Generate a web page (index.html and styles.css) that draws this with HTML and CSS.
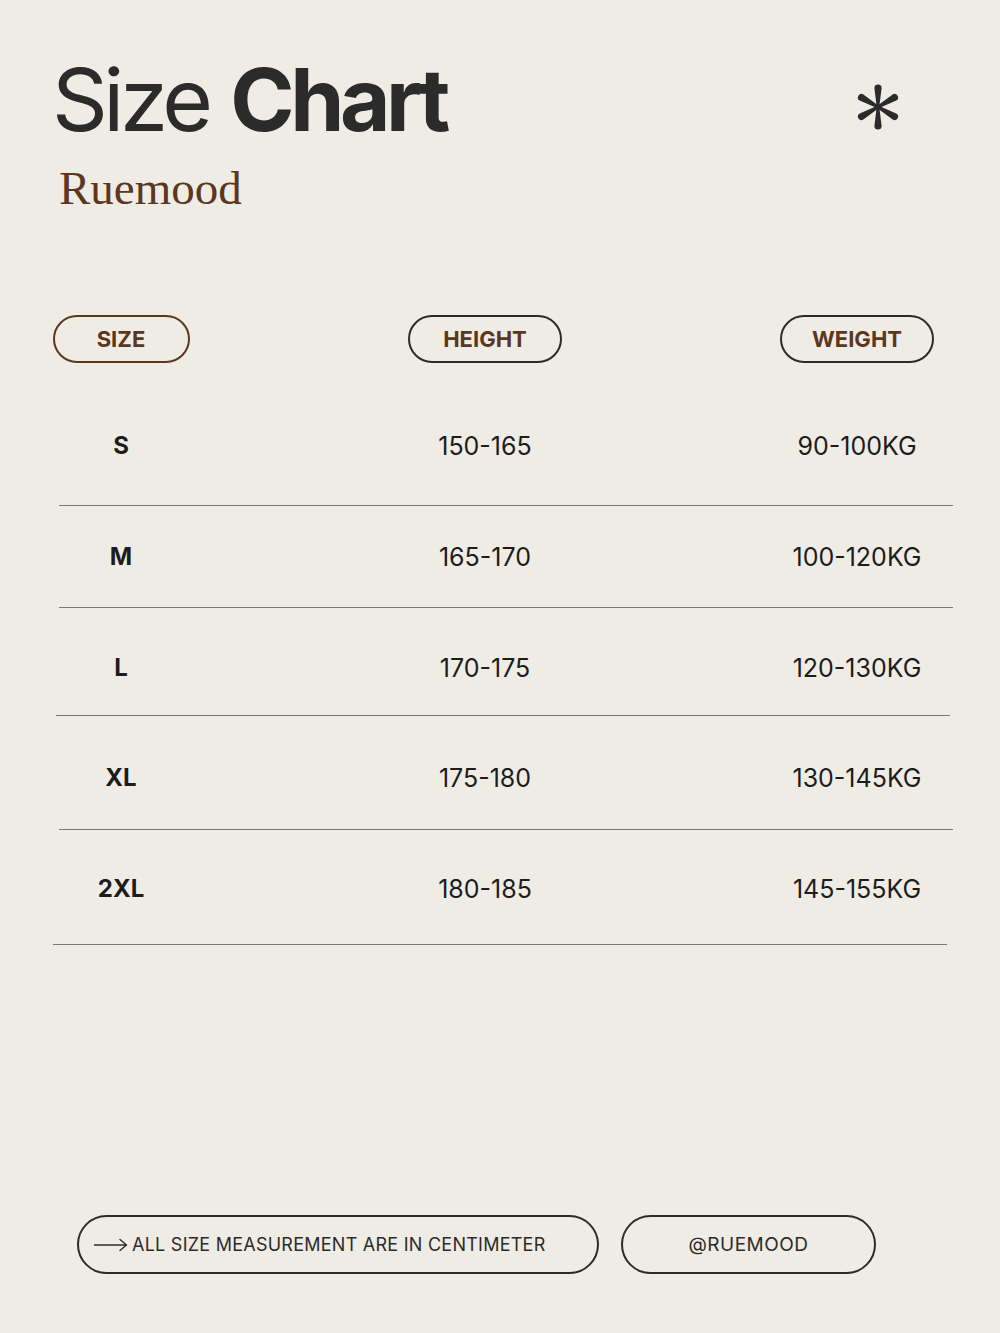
FILE: index.html
```html
<!DOCTYPE html>
<html lang="en">
<head>
<meta charset="utf-8">
<title>Size Chart - Ruemood</title>
<link rel="stylesheet" href="styles.css">
</head>
<body>
<div class="page">
  <header class="header">
    <div class="brand">
      <h1 class="title"><span class="title-light">Size</span> <span class="title-bold">Chart</span></h1>
      <div class="brand-name">Ruemood</div>
    </div>
    <svg class="star" viewBox="-25 -25 50 50" width="50" height="50" aria-hidden="true">
      <g fill="#2b2b2b">
        <path d="M-1.3 0 L-3.6 -19 A3.6 3.6 0 0 1 3.6 -19 L1.3 0 Z"/>
        <path d="M-1.3 0 L-3.6 -19 A3.6 3.6 0 0 1 3.6 -19 L1.3 0 Z" transform="rotate(60)"/>
        <path d="M-1.3 0 L-3.6 -19 A3.6 3.6 0 0 1 3.6 -19 L1.3 0 Z" transform="rotate(120)"/>
        <path d="M-1.3 0 L-3.6 -19 A3.6 3.6 0 0 1 3.6 -19 L1.3 0 Z" transform="rotate(180)"/>
        <path d="M-1.3 0 L-3.6 -19 A3.6 3.6 0 0 1 3.6 -19 L1.3 0 Z" transform="rotate(240)"/>
        <path d="M-1.3 0 L-3.6 -19 A3.6 3.6 0 0 1 3.6 -19 L1.3 0 Z" transform="rotate(300)"/>
        <circle r="2.4"/>
      </g>
    </svg>
  </header>

  <section class="chart">
    <div class="grid head-row">
      <div class="cell"><span class="pill pill-size">SIZE</span></div>
      <div class="cell"><span class="pill pill-wide">HEIGHT</span></div>
      <div class="cell"><span class="pill pill-wide">WEIGHT</span></div>
    </div>

    <div class="grid data-row row-1">
      <div class="cell size">S</div>
      <div class="cell">150-165</div>
      <div class="cell">90-100KG</div>
    </div>
    <div class="rule rule-1"></div>

    <div class="grid data-row row-2">
      <div class="cell size">M</div>
      <div class="cell">165-170</div>
      <div class="cell">100-120KG</div>
    </div>
    <div class="rule rule-2"></div>

    <div class="grid data-row row-3">
      <div class="cell size">L</div>
      <div class="cell">170-175</div>
      <div class="cell">120-130KG</div>
    </div>
    <div class="rule rule-3"></div>

    <div class="grid data-row row-4">
      <div class="cell size">XL</div>
      <div class="cell">175-180</div>
      <div class="cell">130-145KG</div>
    </div>
    <div class="rule rule-4"></div>

    <div class="grid data-row row-5">
      <div class="cell size">2XL</div>
      <div class="cell">180-185</div>
      <div class="cell">145-155KG</div>
    </div>
    <div class="rule rule-5"></div>
  </section>

  <footer class="footer">
    <div class="foot-pill foot-note">
      <svg class="arrow" viewBox="0 0 34 14" width="34" height="14" aria-hidden="true">
        <path d="M0 7 H32 M26 1.5 L32.5 7 L26 12.5" fill="none" stroke="#2b2b2b" stroke-width="1.4" stroke-linecap="round" stroke-linejoin="round"/>
      </svg>
      <span>ALL SIZE MEASUREMENT ARE IN CENTIMETER</span>
    </div>
    <div class="foot-pill foot-handle">@RUEMOOD</div>
  </footer>
</div>
</body>
</html>
```

FILE: styles.css
```css
* { box-sizing: border-box; }

html, body {
  margin: 0;
  padding: 0;
  background: #efece6;
}

.page {
  width: 1000px;
  min-height: 1333px;
  display: flex;
  flex-direction: column;
  background: #efece6;
  color: #2b2b2b;
  font-family: Inter, "Noto Sans", sans-serif;
}

.header {
  display: flex;
  justify-content: space-between;
  align-items: flex-start;
  padding: 56px 97px 0 52px;
}

.title {
  margin: 0;
  font-size: 87px;
  line-height: 1;
  letter-spacing: -4.5px;
  word-spacing: 2px;
  color: #2b2b2b;
  font-weight: 400;
  white-space: nowrap;
}

.title-bold { font-weight: 700; }

.brand-name {
  margin: 22px 0 0 7px;
  font-family: "Liberation Serif", "DejaVu Serif", serif;
  font-size: 47px;
  line-height: 1;
  color: #5b3720;
}

.star {
  display: block;
  margin-top: 26px;
}

.chart {
  margin-top: 103px;
}

.grid {
  display: grid;
  grid-template-columns: 242px 486px 258px;
}

.cell {
  display: flex;
  justify-content: center;
  align-items: center;
  text-align: center;
}

.pill {
  display: flex;
  justify-content: center;
  align-items: center;
  height: 48px;
  border: 2px solid #2b2b2b;
  border-radius: 24px;
  color: #5b3720;
  font-weight: 700;
  font-size: 22px;
  letter-spacing: 0;
}

.pill-size {
  width: 137px;
  border-color: #5b3720;
}

.pill-wide { width: 154px; }

.data-row {
  height: 40px;
  font-size: 25px;
  line-height: 40px;
  color: #1c1c1c;
}

.data-row .size {
  font-weight: 700;
  font-size: 24px;
}

.rule {
  height: 1px;
  width: 894px;
  background: #7a7875;
}

.row-1 { margin-top: 63px; }
.rule-1 { margin: 39px 0 0 59px; }
.row-2 { margin-top: 31px; }
.rule-2 { margin: 30px 0 0 59px; }
.row-3 { margin-top: 40px; }
.rule-3 { margin: 27px 0 0 56px; }
.row-4 { margin-top: 42px; }
.rule-4 { margin: 31px 0 0 59px; }
.row-5 { margin-top: 39px; }
.rule-5 { margin: 35px 0 0 53px; }

.footer {
  margin-top: auto;
  display: flex;
  gap: 22px;
  padding: 0 0 59px 77px;
}

.foot-pill {
  display: flex;
  align-items: center;
  height: 59px;
  border: 2px solid #2b2b2b;
  border-radius: 30px;
  font-family: Inter, "Noto Sans", sans-serif;
  font-size: 18px;
  color: #2b2b2b;
  white-space: nowrap;
}

.foot-note {
  width: 522px;
  padding-left: 15px;
  gap: 4px;
  letter-spacing: 0.25px;
}

.arrow { display: block; }

.foot-handle {
  width: 255px;
  justify-content: center;
  font-size: 19px;
  letter-spacing: 0.5px;
}
```
